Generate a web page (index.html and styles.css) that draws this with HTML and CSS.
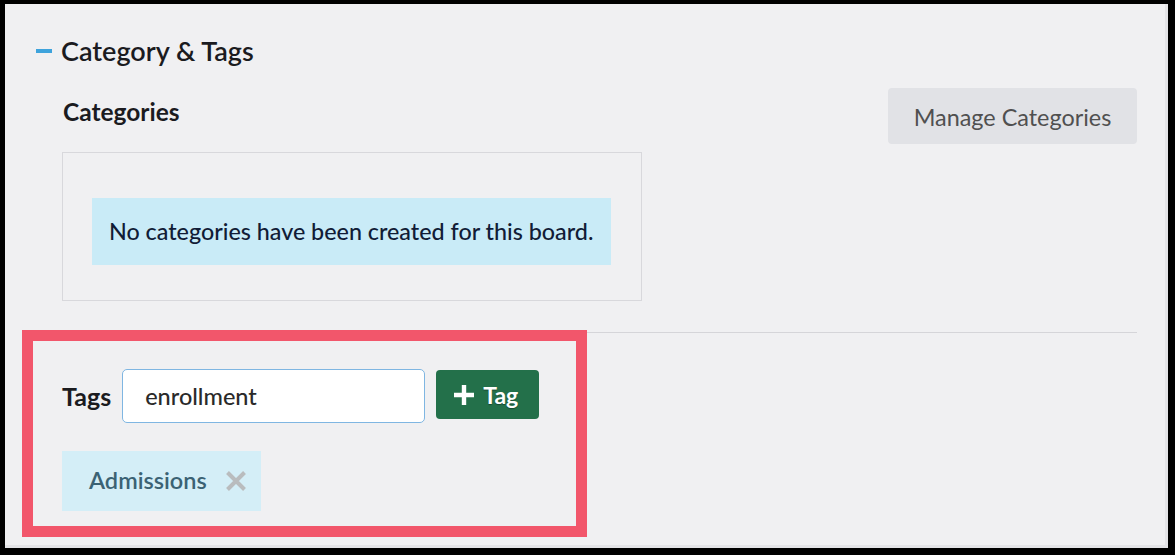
FILE: index.html
```html
<!DOCTYPE html>
<html lang="en">
<head>
<meta charset="utf-8">
<title>Category &amp; Tags</title>
<link rel="stylesheet" href="styles.css">
</head>
<body>
<div class="frame">
  <div class="section-head">
    <span class="minus"></span>
    <h2 class="section-title">Category &amp; Tags</h2>
  </div>
  <div class="cat-row">
    <h3 class="cat-title">Categories</h3>
    <button class="btn-manage" type="button">Manage Categories</button>
  </div>
  <div class="cat-box">
    <div class="alert">No categories have been created for this board.</div>
  </div>
  <div class="divider"></div>
  <div class="tags-row">
    <label class="tags-label" for="tag-input">Tags</label>
    <input id="tag-input" class="tag-input" type="text" value="enrollment">
    <button class="btn-add" type="button">
      <svg class="plus" viewBox="0 0 22 22" width="22" height="22" aria-hidden="true"><path d="M11 1V21M1 11H21" stroke="#fff" stroke-width="4.4" fill="none"/></svg>
      <span>Tag</span>
    </button>
  </div>
  <div class="chips">
    <span class="chip">Admissions
      <svg class="chip-x" viewBox="0 0 22 22" width="22" height="22" aria-hidden="true"><path d="M2.5 2.5L19.5 19.5M19.5 2.5L2.5 19.5" stroke="#b9bcbe" stroke-width="4" fill="none"/></svg>
    </span>
  </div>
  <div class="highlight"></div>
</div>
</body>
</html>
```

FILE: styles.css
```css
html, body {
  margin: 0;
  padding: 0;
  background: #000;
}
body {
  width: 1175px;
  height: 555px;
  overflow: hidden;
  font-family: Lato, "Open Sans", "Liberation Sans", sans-serif;
}
.frame {
  position: relative;
  box-sizing: border-box;
  margin: 4px 0 0 5px;
  width: 1163px;
  height: 544px;
  background: #f0f0f2;
  border-right: 3px solid #e4e4e7;
  border-bottom: 3px solid #e4e4e7;
  padding: 32px 28px 0 57px;
}
.section-head {
  display: flex;
  align-items: center;
  margin-left: -26px;
  height: 30px;
}
.minus {
  display: block;
  width: 16px;
  height: 4px;
  background: #3ea3dc;
  margin-right: 9px;
}
.section-title {
  margin: 0;
  font-size: 27px;
  line-height: 30px;
  font-weight: 600;
  color: #1b1b1f;
}
.cat-row {
  display: flex;
  justify-content: space-between;
  align-items: flex-start;
  margin-top: 22px;
}
.cat-title {
  margin: 10px 0 0 1px;
  font-size: 24.5px;
  line-height: 28px;
  font-weight: 700;
  color: #1b1b1f;
}
.btn-manage {
  font-family: inherit;
  width: 249px;
  height: 56px;
  border: none;
  border-radius: 4px;
  background: #e1e2e6;
  color: #505050;
  font-size: 23.4px;
  padding: 2px 0 0;
  margin-top: 0;
}
.cat-box {
  box-sizing: border-box;
  width: 580px;
  margin-top: 8px;
  border: 1px solid #d8d8dc;
  padding: 45px 0 35px 29px;
}
.alert {
  display: inline-block;
  height: 67px;
  line-height: 67px;
  padding: 0 18px 0 17px;
  background: #c9ebf7;
  color: #111c36;
  font-size: 23.3px;
  font-weight: 500;
}
.divider {
  height: 1px;
  background: #d5d5d9;
  margin-top: 31px;
}
.tags-row {
  display: flex;
  align-items: center;
  margin-top: 36px;
  height: 54px;
}
.tags-label {
  font-size: 25px;
  font-weight: 700;
  color: #1b1b1f;
  margin-right: 11px;
}
.tag-input {
  box-sizing: border-box;
  width: 303px;
  height: 54px;
  border: 1px solid #7fb6e2;
  border-radius: 5px;
  background: #fff;
  padding: 0 0 0 22px;
  font-family: inherit;
  font-size: 23.5px;
  font-weight: 500;
  color: #2a2a2a;
  outline: none;
}
.btn-add {
  display: flex;
  align-items: center;
  gap: 8px;
  box-sizing: border-box;
  width: 103px;
  height: 49px;
  margin-left: 11px;
  margin-top: -3px;
  border: none;
  border-radius: 4px;
  background: #23704a;
  color: #fff;
  font-family: inherit;
  font-size: 23px;
  font-weight: 700;
  padding: 0 0 0 17px;
  text-shadow: 0 1px 1px rgba(0,0,0,0.35);
}
.plus {
  display: block;
}
.chips {
  margin-top: 28px;
  display: flex;
}
.chip {
  display: flex;
  align-items: center;
  box-sizing: border-box;
  width: 199px;
  height: 60px;
  padding: 0 0 3px 27px;
  background: #d4eef7;
  color: #3b6274;
  font-size: 23.5px;
  font-weight: 600;
  gap: 18px;
}
.chip-x {
  display: block;
  margin-top: 3px;
}
.highlight {
  position: absolute;
  left: 17px;
  top: 326px;
  width: 565px;
  height: 207px;
  box-sizing: border-box;
  border: 11px solid #f2566b;
  pointer-events: none;
}
```
